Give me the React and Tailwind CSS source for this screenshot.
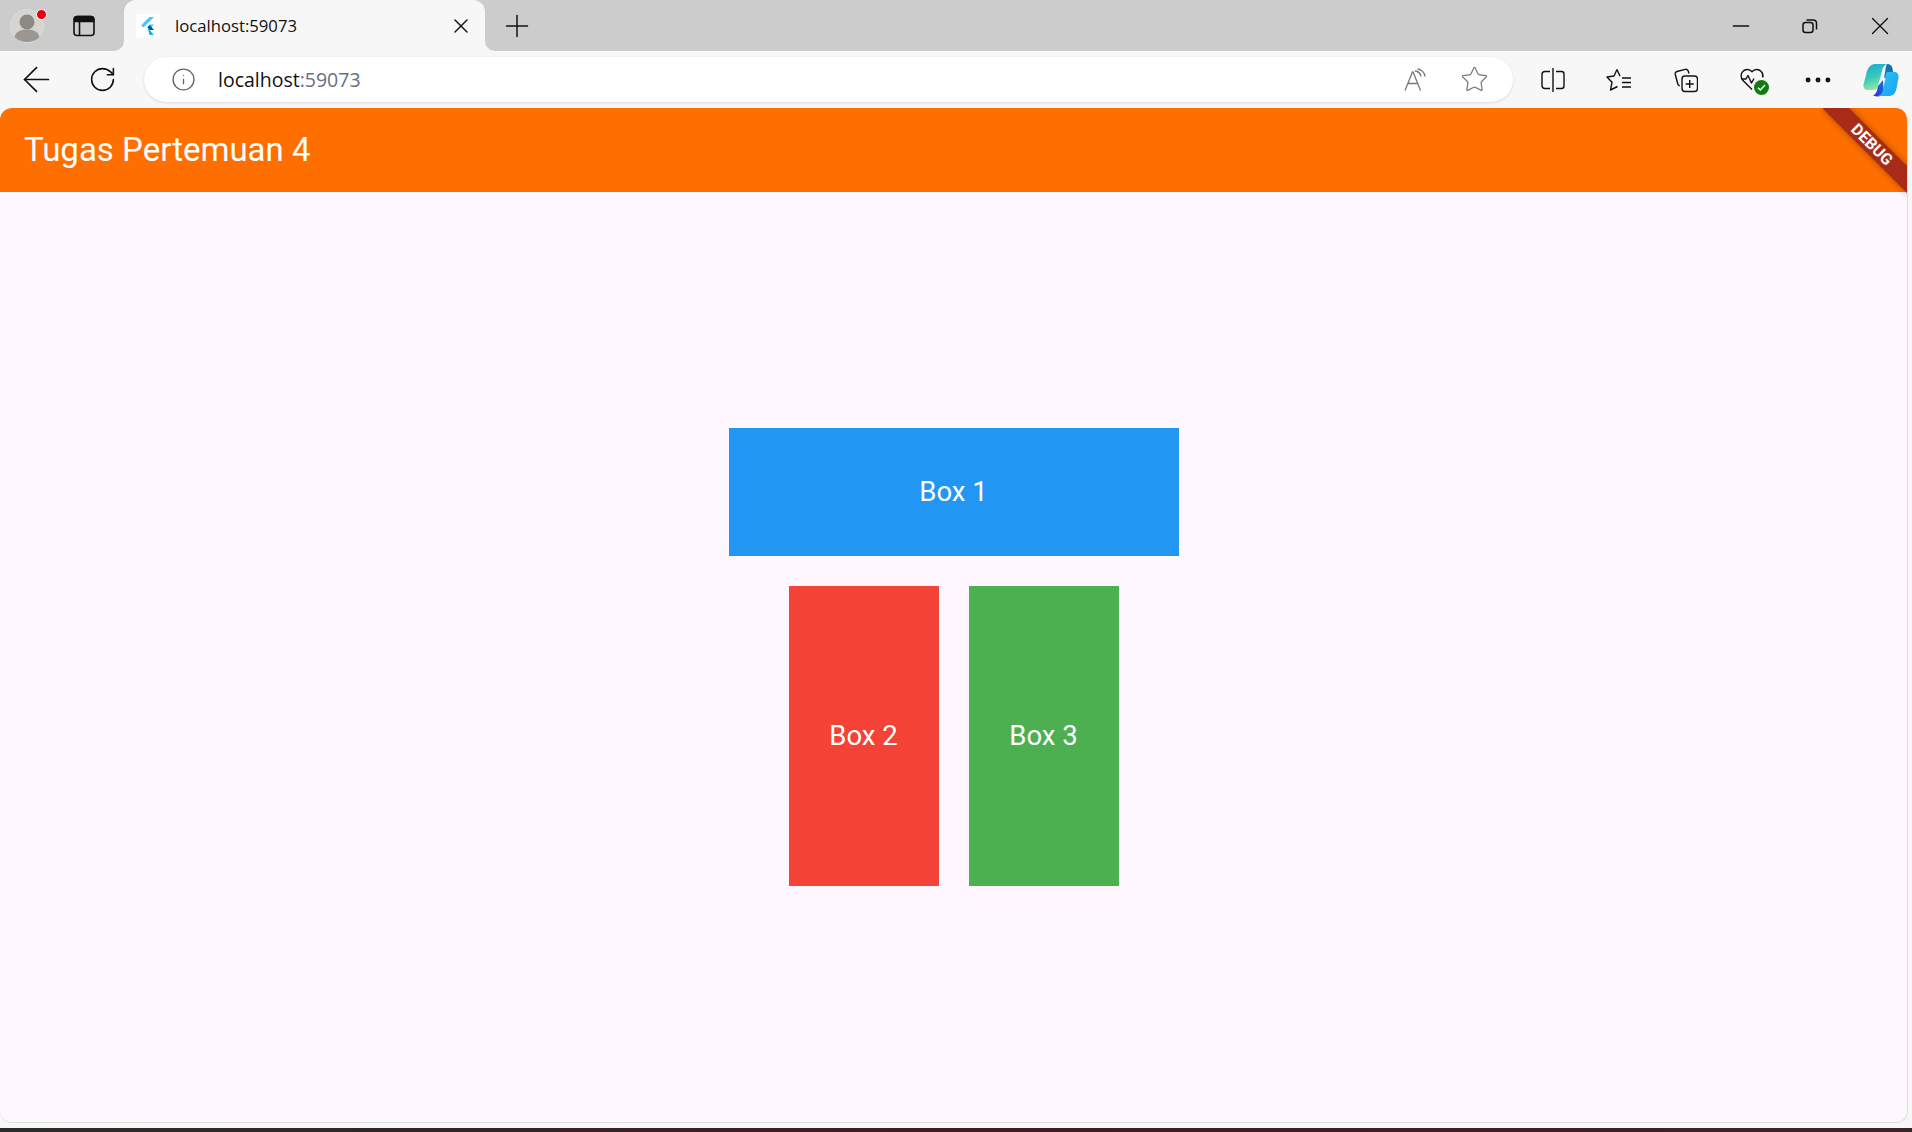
import { ArrowLeft, Ellipsis, Info, Minus, Plus, RotateCw, Star, X } from "lucide-react";

const FlutterIcon = () => (
  <svg width="24" height="24" viewBox="0 0 24 24">
    <rect width="24" height="24" fill="#ffffff" />
    <path d="M13.5 3h4.500L7.500 13.500l-2.300-2.300z" fill="#47c5fb" />
    <path d="M13.5 10.500h4.500l-4.200 4.700-2.300-2z" fill="#47c5fb" />
    <path d="M11.5 13.200l2.200-2.100 4.300 4.800-.1.100h-4.400z" fill="#00569e" />
    <path d="M11.5 13.200l2.300 2.700 4.100 5.100h-4.400z" fill="#00b5f8" />
  </svg>
);

const ProfileIcon = () => (
  <div className="relative h-[34px] w-[34px]">
    <svg width="34" height="34" viewBox="0 0 34 34">
      <circle cx="17" cy="17" r="16.5" fill="#d6d4d1" stroke="#dedcda" />
      <circle cx="17" cy="13" r="7.5" fill="#8c8985" />
      <path d="M4.500 28c1.500-5.500 6-7.500 12.500-7.500s11 2 12.500 7.500c-3 3.200-7.500 5-12.500 5s-9.500-1.800-12.500-5z" fill="#9a9792" />
    </svg>
    <span className="absolute right-[-3px] top-[0px] h-[11px] w-[11px] rounded-full border border-white bg-[#e3000f]" />
  </div>
);

const TabsIcon = () => (
  <svg width="22" height="22" viewBox="0 0 22 22" fill="none" stroke="#111" strokeWidth="1.6">
    <rect x="1" y="1.500" width="20" height="19" rx="3" />
    <path d="M1.500 4.500c0-2 1-3 3-3h13c2 0 3 1 3 3v2h-19z" fill="#111" />
    <path d="M6.500 6.500v14" />
  </svg>
);

const RestoreIcon = () => (
  <svg width="16" height="16" viewBox="0 0 16 16" fill="none" stroke="#111" strokeWidth="1.500">
    <rect x="1" y="4.500" width="10" height="10" rx="2.500" />
    <path d="M4.500 2h6.500c2 0 3.500 1.500 3.500 3.500v6" />
  </svg>
);

const ReadAloudIcon = () => (
  <svg width="24" height="24" viewBox="0 0 24 24" fill="none" stroke="#7a7a7a" strokeWidth="1.300">
    <path d="M2 22.500L9.500 4h.6l7.400 18.500M5 15.500h10" />
    <path d="M12 3c3 .3 5.500 2.500 6 5.500M14.500 1c3.800.5 7 3.500 7.500 7.500" strokeWidth="1.500" />
  </svg>
);

const SplitIcon = () => (
  <svg width="24" height="26" viewBox="0 0 24 26" fill="none" stroke="#111" strokeWidth="1.400">
    <path d="M9 4.500H4c-1.700 0-3 1.300-3 3v11c0 1.700 1.300 3 3 3h5" />
    <path d="M15 4.500h5.500c1.400 0 2.500 1.100 2.500 2.500v12c0 1.400-1.100 2.500-2.500 2.500H15" />
    <path d="M12 1v24" />
  </svg>
);

const FavoritesIcon = () => (
  <svg width="26" height="24" viewBox="0 0 26 24" fill="none" stroke="#111" strokeWidth="1.400" strokeLinejoin="round">
    <path d="M11 1.500L14 8.200M11 1.500L8 8l-7 1 5 5.200L4.500 22l7-3.500" />
    <path d="M16 10h9M16 14.500h9M16 19h9" />
  </svg>
);

const CollectionsIcon = () => (
  <svg width="24" height="26" viewBox="0 0 24 26" fill="none" stroke="#111" strokeWidth="1.400">
    <rect x="8" y="9" width="15.500" height="15.500" rx="3" />
    <path d="M15.700 13v8M11.700 17h8" />
    <path d="M15 6.500l-.8-2.500c-.4-1.300-1.700-2-3-1.600L3 4.500C1.700 4.900 1 6.200 1.300 7.500l2.500 9.500c.3 1 1 1.700 2 1.800" />
  </svg>
);

const HealthIcon = () => (
  <div className="relative h-[26px] w-[26px]">
    <svg width="26" height="26" viewBox="0 0 26 26" fill="none" stroke="#111" strokeWidth="1.400" strokeLinejoin="round">
      <path d="M12 22.500L3 13.500C.5 11 .5 6.500 3 4.200c2.600-2.500 6.500-2.300 9 .6 2.500-2.900 6.500-3.100 9-.6 1.700 1.700 2.300 4 1.700 6.300" />
      <path d="M1.500 12H6l2-3.500 3.500 7.500 2.500-4.500" />
    </svg>
    <span className="absolute bottom-[-2px] right-[-3px] flex h-[15px] w-[15px] items-center justify-center rounded-full bg-[#107c10]">
      <svg width="9" height="9" viewBox="0 0 9 9" fill="none" stroke="#fff" strokeWidth="1.500">
        <path d="M1 4.800l2.300 2.200L8 2" />
      </svg>
    </span>
  </div>
);

const CopilotIcon = () => (
  <svg width="36" height="34" viewBox="0 0 36 34">
    <defs>
      <linearGradient id="copA" x1="0" y1="0" x2="0.3" y2="1">
        <stop offset="0" stopColor="#1fa3d8" />
        <stop offset="0.55" stopColor="#35c9b8" />
        <stop offset="1" stopColor="#8ae6a0" />
      </linearGradient>
      <linearGradient id="copB" x1="0.8" y1="0" x2="0.3" y2="1">
        <stop offset="0" stopColor="#0c6f9c" />
        <stop offset="0.4" stopColor="#1e7fd8" />
        <stop offset="1" stopColor="#2b3fd6" />
      </linearGradient>
      <linearGradient id="copC" x1="0" y1="0" x2="1" y2="1">
        <stop offset="0" stopColor="#2fc4f5" />
        <stop offset="1" stopColor="#1a9ff0" />
      </linearGradient>
    </defs>
    <path d="M12 1h12c-3 1-4 3-5 7l-4 15c-.8 3-2.500 4-5 4H5c-3 0-5-2-4.500-5.500L3 12C4 6 7 1 12 1z" fill="url(#copA)" />
    <path d="M24 1c3 0 5 1.500 5.500 4.500L31 14l-10 1 1-6c.4-3 .8-6 2-8zM15 23l5-6 1 15c-3 1.500-7.500 2-11 .5 3-1 4.200-4.500 5-9.500z" fill="url(#copB)" />
    <path d="M24 9h7c3 0 5 2 4.500 5.500l-2 11c-1 5-3.500 7.500-8 7.500H15c3-1 4.300-3 5-6l2.500-12c.3-3 .7-5 1.500-6z" fill="url(#copC)" />
  </svg>
);

const TabStrip = () => (
  <div className="flex h-[51px] bg-[#f7f7f7]">
    <div className="flex w-[124px] items-center rounded-br-[10px] bg-[#cccccc]">
      <div className="flex w-[54px] justify-center">
        <ProfileIcon />
      </div>
      <div className="ml-[3px] flex w-[54px] justify-center">
        <TabsIcon />
      </div>
    </div>
    <div className="w-[361px] bg-[#cccccc]">
      <div className="flex h-full items-center rounded-t-[12px] bg-[#f7f7f7] pl-[12px] pr-[12px]">
        <FlutterIcon />
        <span className="ml-[15px] flex-1 font-['Open_Sans',sans-serif] text-[16.700px] text-[#111]">localhost:59073</span>
        <X size={24} strokeWidth={1.4} color="#111" />
      </div>
    </div>
    <div className="flex flex-1 items-center rounded-bl-[10px] bg-[#cccccc]">
      <div className="flex w-[64px] justify-center">
        <Plus size={36} strokeWidth={1} color="#111" />
      </div>
      <div className="flex-1" />
      <div className="flex w-[62px] justify-center">
        <Minus size={26} strokeWidth={1.5} color="#111" />
      </div>
      <div className="flex w-[76px] justify-center">
        <RestoreIcon />
      </div>
      <div className="flex w-[64px] justify-center">
        <X size={30} strokeWidth={1.1} color="#111" />
      </div>
    </div>
  </div>
);

const Toolbar = () => (
  <div className="flex h-[57px] items-center bg-[#f7f7f7]">
    <div className="flex w-[72px] justify-center">
      <ArrowLeft size={41} strokeWidth={1} color="#111" />
    </div>
    <div className="flex w-[60px] justify-center">
      <RotateCw size={29} strokeWidth={1.300} color="#111" />
    </div>
    <div className="ml-[12px] flex h-[45px] w-[1369px] items-center rounded-full bg-white pl-[27px] pr-[24px] shadow-[0_1px_3px_rgba(0,0,0,0.12)]">
      <Info size={25} strokeWidth={1.300} color="#666" />
      <span className="ml-[22px] flex-1 font-['Open_Sans',sans-serif] text-[19.500px] text-[#111]">
        localhost<span className="text-[#667080]">:59073</span>
      </span>
      <ReadAloudIcon />
      <div className="ml-[33px] flex">
        <Star size={29} strokeWidth={1.050} color="#7a7a7a" />
      </div>
    </div>
    <div className="ml-[6px] flex w-[67px] justify-center">
      <SplitIcon />
    </div>
    <div className="flex w-[66px] justify-center">
      <FavoritesIcon />
    </div>
    <div className="flex w-[67px] justify-center">
      <CollectionsIcon />
    </div>
    <div className="flex w-[68px] justify-center">
      <HealthIcon />
    </div>
    <div className="flex w-[62px] justify-center">
      <Ellipsis size={34} strokeWidth={1.5} color="#111" />
    </div>
    <div className="ml-[10px] flex w-[44px] justify-center">
      <CopilotIcon />
    </div>
  </div>
);

const Box = ({ label, className }) => (
  <div className={`flex items-center justify-center font-['Roboto',sans-serif] text-[27.500px] text-white ${className}`}>
    {label}
  </div>
);

export default function App() {
  return (
    <div className="flex h-[1132px] w-full flex-col overflow-hidden bg-[#f7f7f7]">
      <TabStrip />
      <Toolbar />
      <div className="flex-1 pr-[4px]">
        <div className="relative flex h-full flex-col overflow-hidden rounded-[12px] border-b border-r border-[#dedede] bg-[#fef7ff]">
          <header className="flex h-[84px] shrink-0 items-center bg-[#ff6f00] pl-[24px]">
            <h1 className="font-['Roboto',sans-serif] text-[33px] text-white">Tugas Pertemuan 4</h1>
          </header>
          <main className="flex flex-1 flex-col items-center justify-center gap-[30px]">
            <Box label="Box 1" className="h-[128px] w-[450px] bg-[#2196f3]" />
            <div className="flex gap-[30px]">
              <Box label="Box 2" className="h-[300px] w-[150px] bg-[#f44336]" />
              <Box label="Box 3" className="h-[300px] w-[150px] bg-[#4caf50]" />
            </div>
          </main>
          {/* Flutter debug banner */}
          <div className="absolute right-[-25px] top-[27px] flex h-[19px] w-[120px] rotate-45 items-center justify-center bg-[#a92b17] font-['Roboto',sans-serif] text-[16px] font-bold text-white shadow-[0_0_7px_rgba(0,0,0,0.35)]">
            DEBUG
          </div>
        </div>
      </div>
      <div className="mt-[5px] h-[4px] shrink-0 bg-linear-to-r from-[#2b2b2b] via-[#3d1c22] to-[#3a2428]" />
    </div>
  );
}
